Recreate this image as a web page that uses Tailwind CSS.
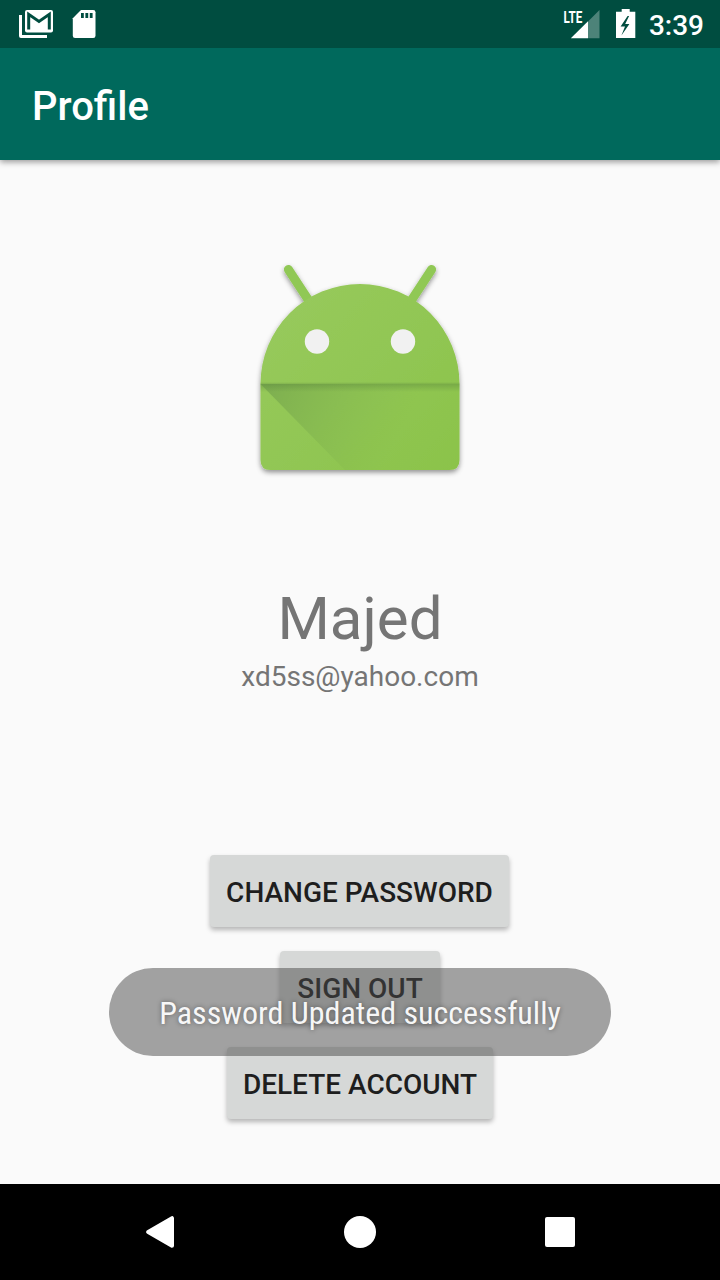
<!DOCTYPE html>
<html lang="en">
<head>
<meta charset="utf-8">
<title>Profile</title>
<script src="https://cdn.jsdelivr.net/npm/@tailwindcss/browser@4"></script>
</head>
<body class="bg-[#fafafa] font-['Roboto',sans-serif]">
<div class="relative flex h-[1280px] w-[720px] flex-col overflow-hidden bg-[#fafafa]">
  <header class="z-10 shrink-0 bg-[#00695c] shadow-[0_2px_6px_rgba(0,0,0,0.4)]">
    <div class="flex h-12 items-center justify-between bg-[#004d40] text-white">
      <svg class="h-12 w-[120px]" viewBox="0 0 120 48" fill="#fff">
        <path d="M19 15h3v20h25v3H21q-2 0-2-2z"/>
        <rect x="25" y="10" width="28" height="22.5" rx="2"/>
        <path d="M28.7 29.5V14.3L39 21.4 49.3 14.3V29.5" fill="none" stroke="#004d40" stroke-width="3"/>
        <path d="M81 10h12.2q2.3 0 2.3 2.3v23.4q0 2.3-2.3 2.3H75.1q-2.3 0-2.3-2.3V18.2z"/>
        <path d="M81 12.9h2.8v5H81zm4.4 0h2.8v5h-2.8zm4.4 0h2.8v5h-2.8z" fill="#004d40"/>
      </svg>
      <div class="flex items-center pr-4">
        <svg class="h-12 w-[89px]" viewBox="560 0 89 48" fill="#fff">
          <text x="563.4" y="22.6" font-size="17" font-weight="700" textLength="18.8" lengthAdjust="spacingAndGlyphs">LTE</text>
          <path d="M588 21.5 599.5 10v28.3H588z" fill="#4d8379"/>
          <path d="M570.8 38.3 588 21.2v17.1z"/>
          <path d="M616 11.8h5.7V9h8v2.8h5.6V38H616z"/>
          <path d="M627.6 16 620.6 26.6h4.4l-3.6 8.8 8-11.4h-4.2l3.9-8z" fill="#004d40"/>
        </svg>
        <span class="pt-1 text-[28px] leading-8 font-medium">3:39</span>
      </div>
    </div>
    <div class="flex h-28 items-center px-8 pt-1.5 text-[40px] font-medium text-white"><h1>Profile</h1></div>
  </header>

  <main class="flex flex-1 flex-col items-center pt-[90px]">
    <svg class="h-[240px] w-[240px]" viewBox="240 250 240 240">
      <defs>
        <linearGradient id="body" x1="260" y1="284" x2="460" y2="470" gradientUnits="userSpaceOnUse"><stop offset="0" stop-color="#98ca5e"/><stop offset="1" stop-color="#8bc34a"/></linearGradient>
        <linearGradient id="shade" x1="270" y1="385" x2="395" y2="445" gradientUnits="userSpaceOnUse"><stop offset="0" stop-color="#6c9b4a" stop-opacity=".55"/><stop offset="1" stop-color="#7eb148" stop-opacity="0"/></linearGradient>
        <linearGradient id="seam" x1="0" y1="382" x2="0" y2="392" gradientUnits="userSpaceOnUse"><stop offset="0" stop-color="#55803a" stop-opacity="0"/><stop offset=".25" stop-color="#55803a" stop-opacity=".36"/><stop offset="1" stop-color="#55803a" stop-opacity="0"/></linearGradient>
        <filter id="drop" x="-10%" y="-10%" width="120%" height="120%"><feDropShadow dx="0" dy="2.4" stdDeviation="2.4" flood-opacity=".42"/></filter>
      </defs>
      <g filter="url(#drop)">
        <path d="M288.4 269.5 311 304M431.6 269.5 409 304" fill="none" stroke="#90c855" stroke-width="9" stroke-linecap="round"/>
        <path d="M260.5 384a99.5 100 0 0 1 199 0v76q0 10-10 10h-179q-10 0-10-10z" fill="url(#body)"/>
      </g>
      <path d="M260.5 384h199v76q0 10-10 10H345z" fill="url(#shade)"/>
      <path d="M260.5 382h199v10h-199z" fill="url(#seam)"/>
      <circle cx="317" cy="341.5" r="12.2" fill="#f1f1f1"/><circle cx="403" cy="341.5" r="12.2" fill="#f1f1f1"/>
    </svg>
    <h2 class="mt-[93px] text-[60px] leading-[72px] text-[#757575]">Majed</h2>
    <p class="mt-[5px] text-[28px] leading-[34px] text-[#757575]">xd5ss@yahoo.com</p>
    <div class="mt-[161px] flex flex-col items-center gap-6 text-[28px] font-medium text-[#1e1e1e]">
      <button class="mr-px h-[72px] w-[299px] rounded-[4px] bg-[#d6d8d7] pt-1 whitespace-nowrap shadow-[0_3px_5px_rgba(0,0,0,0.28)]">CHANGE PASSWORD</button>
      <button class="h-[72px] w-[160px] rounded-[4px] bg-[#d6d8d7] pt-1 whitespace-nowrap shadow-[0_3px_5px_rgba(0,0,0,0.28)]">SIGN OUT</button>
      <button class="h-[72px] w-[266px] rounded-[4px] bg-[#d6d8d7] pt-1 whitespace-nowrap shadow-[0_3px_5px_rgba(0,0,0,0.28)]">DELETE ACCOUNT</button>
    </div>
  </main>

  <div class="absolute top-[968px] left-[109px] flex h-22 w-[502px] items-center justify-center rounded-full bg-[#484848]/50 pt-0.5">
    <span class="font-['Roboto_Condensed','Roboto',sans-serif] text-[32px] whitespace-nowrap text-white/95 [font-stretch:75%] [text-shadow:0_0_5px_rgba(0,0,0,0.4)]">Password Updated successfully</span>
  </div>

  <nav class="flex h-24 shrink-0 items-center justify-center gap-[168px] bg-black">
    <svg class="h-8 w-8" viewBox="0 0 32 32"><path d="M4.2 16 28 2.2v27.6z" fill="#fff" stroke="#fff" stroke-width="4" stroke-linejoin="round"/></svg>
    <svg class="h-8 w-8" viewBox="0 0 32 32"><circle cx="16" cy="16" r="16" fill="#fff"/></svg>
    <svg class="h-8 w-8" viewBox="0 0 32 32"><rect x="1" y="1" width="30" height="30" rx="2" fill="#fff"/></svg>
  </nav>
</div>
</body>
</html>
